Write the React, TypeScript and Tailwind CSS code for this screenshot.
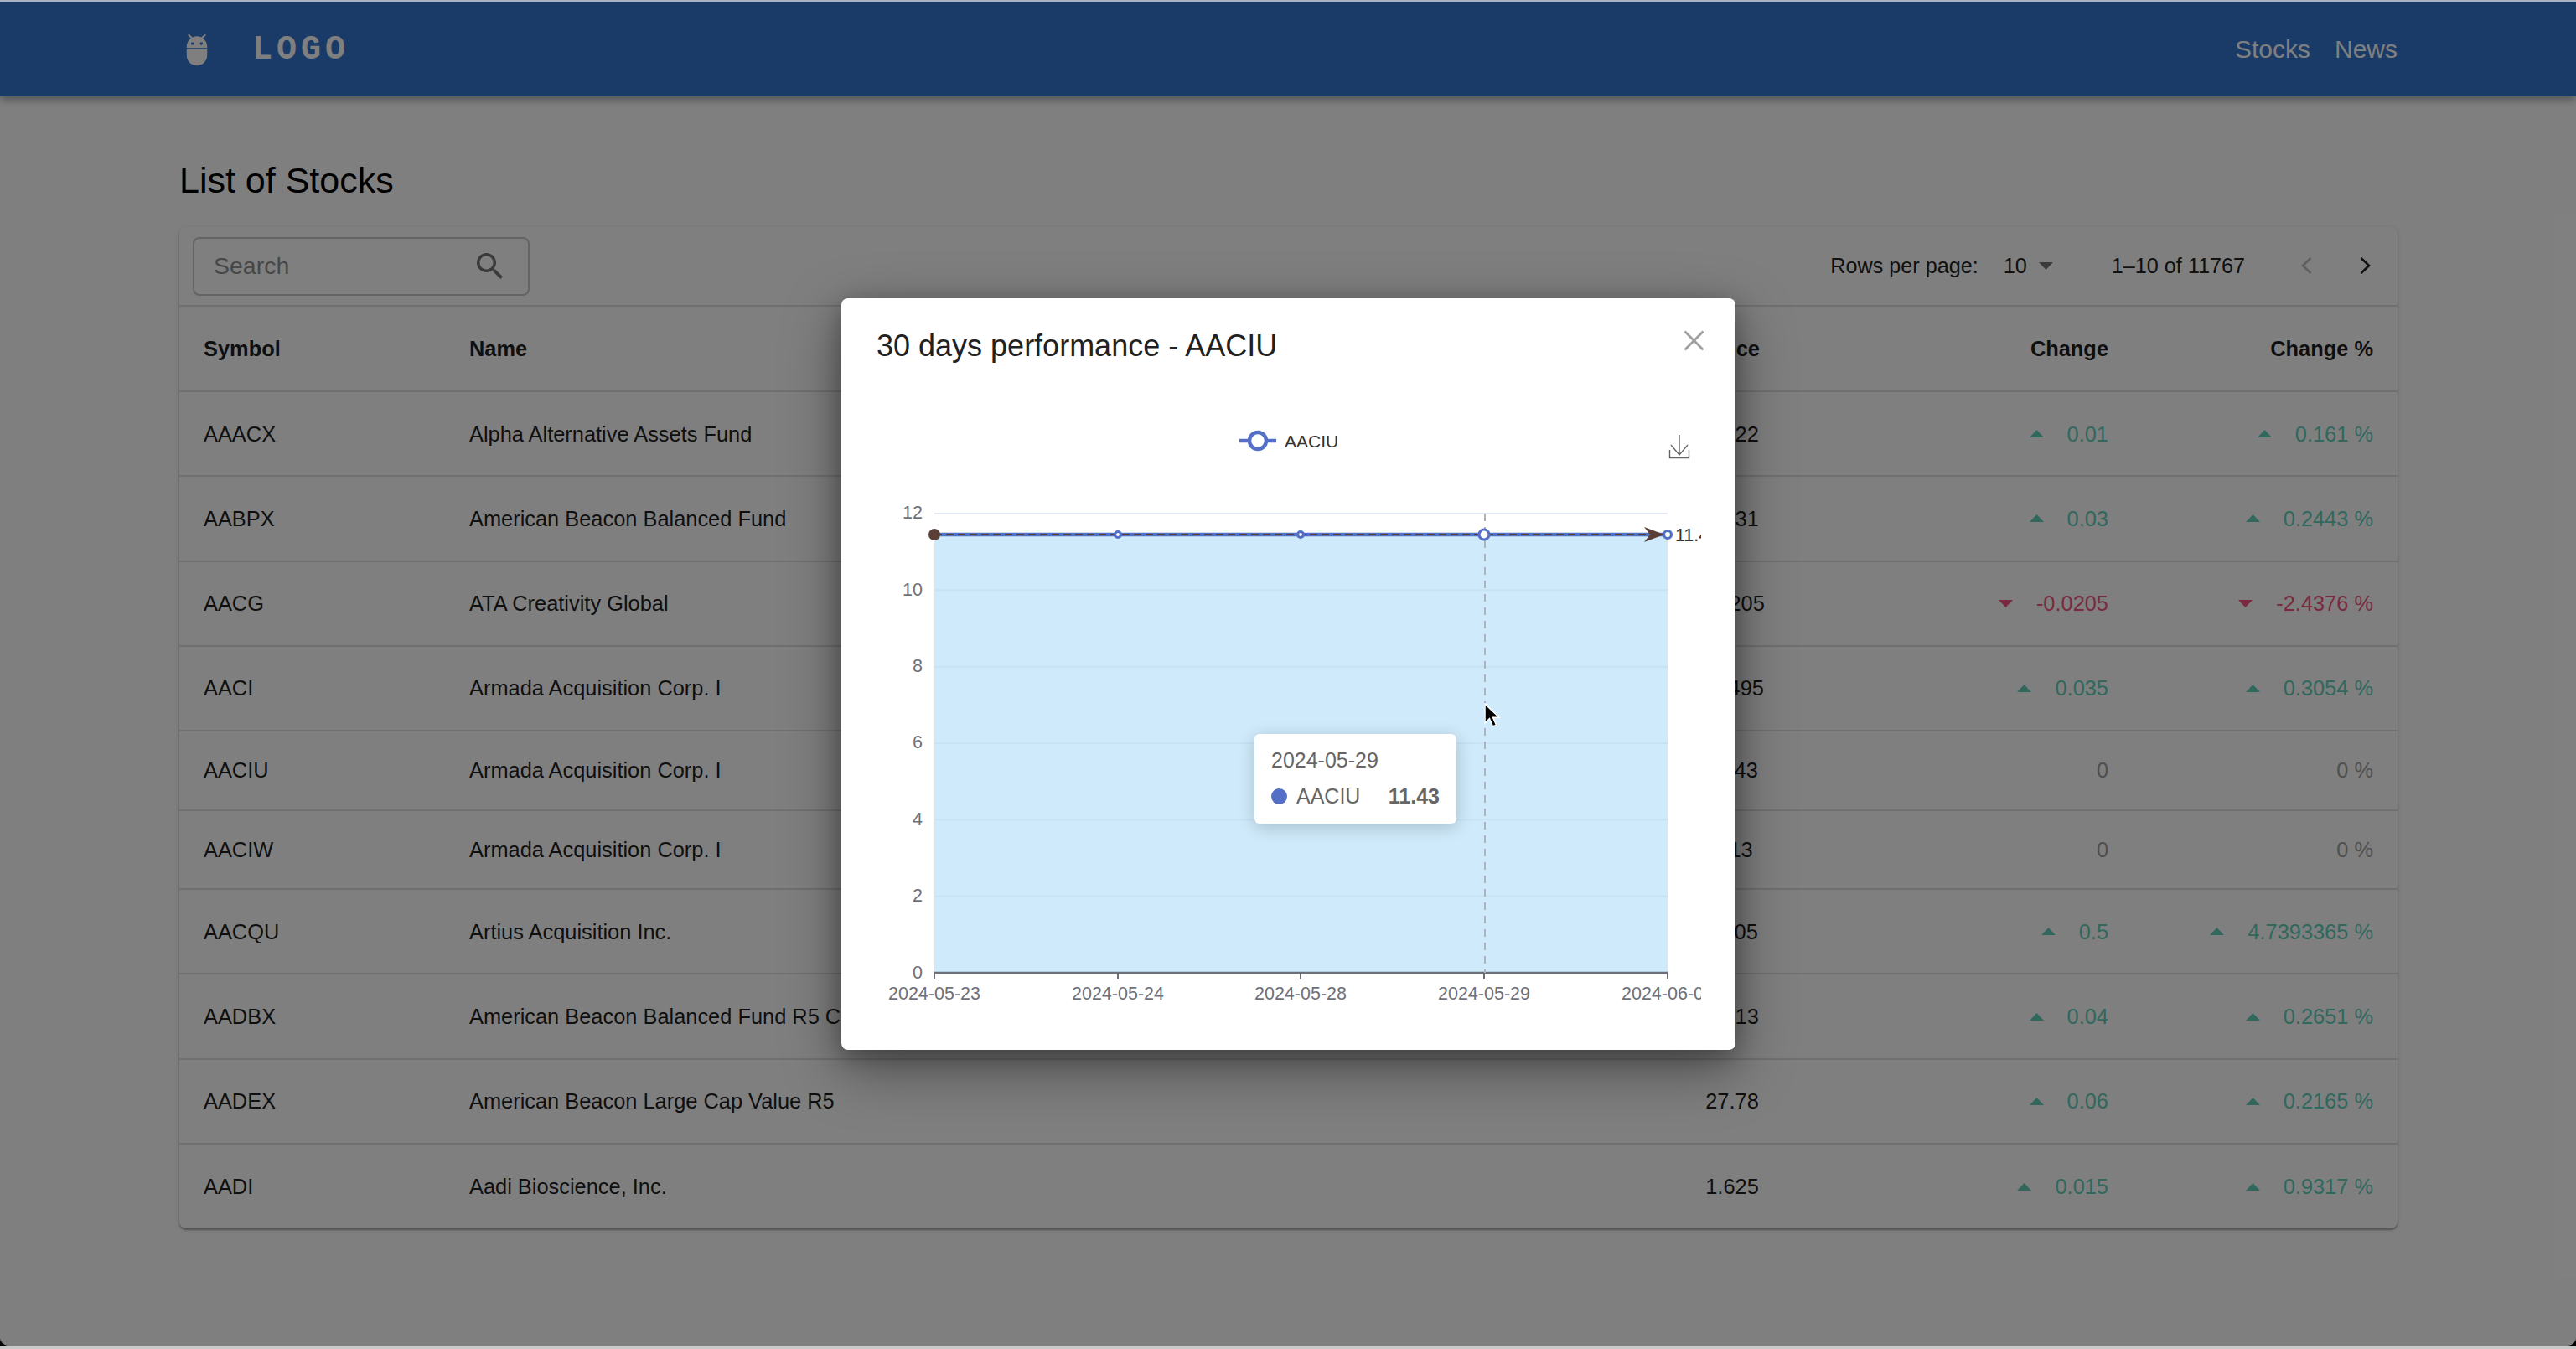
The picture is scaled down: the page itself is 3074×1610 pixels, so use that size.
const FONT = "font-['Liberation_Sans',Arial,sans-serif]";

type Row = { symbol: string; name: string; price: string; change: string; pct: string; dir: "up" | "down" | "flat" };

const ROWS: Row[] = [
  { symbol: "AAACX", name: "Alpha Alternative Assets Fund", price: "16.22", change: "0.01", pct: "0.161 %", dir: "up" },
  { symbol: "AABPX", name: "American Beacon Balanced Fund", price: "12.31", change: "0.03", pct: "0.2443 %", dir: "up" },
  { symbol: "AACG", name: "ATA Creativity Global", price: "0.8205", change: "-0.0205", pct: "-2.4376 %", dir: "down" },
  { symbol: "AACI", name: "Armada Acquisition Corp. I", price: "11.495", change: "0.035", pct: "0.3054 %", dir: "up" },
  { symbol: "AACIU", name: "Armada Acquisition Corp. I", price: "11.43", change: "0", pct: "0 %", dir: "flat" },
  { symbol: "AACIW", name: "Armada Acquisition Corp. I", price: "0.13", change: "0", pct: "0 %", dir: "flat" },
  { symbol: "AACQU", name: "Artius Acquisition Inc.", price: "11.05", change: "0.5", pct: "4.7393365 %", dir: "up" },
  { symbol: "AADBX", name: "American Beacon Balanced Fund R5 Class", price: "15.13", change: "0.04", pct: "0.2651 %", dir: "up" },
  { symbol: "AADEX", name: "American Beacon Large Cap Value R5", price: "27.78", change: "0.06", pct: "0.2165 %", dir: "up" },
  { symbol: "AADI", name: "Aadi Bioscience, Inc.", price: "1.625", change: "0.015", pct: "0.9317 %", dir: "up" },
];

function Caret({ dir }: { dir: "up" | "down" }) {
  return (
    <svg viewBox="0 0 17 9" className="w-[17px] h-[9px] mr-[28px] shrink-0 fill-current">
      {dir === "up" ? <path d="M8.5 0 17 9H0z" /> : <path d="M0 0h17L8.5 9z" />}
    </svg>
  );
}

function Delta({ value, dir }: { value: string; dir: Row["dir"] }) {
  const color = dir === "up" ? "text-[#63d0bb]" : dir === "down" ? "text-[#f5557f]" : "text-[#9e9e9e]";
  return (
    <div className={`flex items-center justify-end ${color}`}>
      {dir !== "flat" && <Caret dir={dir} />}
      <span>{value}</span>
    </div>
  );
}

function StockTable() {
  return (
    <div className="w-full rounded-lg bg-white shadow-[0_2px_2px_rgba(0,0,0,0.3),0_1px_6px_rgba(0,0,0,0.12)]">
      <div className="flex h-[95px] items-center border-b-2 border-[#e0e0e0] pl-4 pr-[31px]">
        <div className="flex h-[70px] w-[402px] items-center justify-between rounded-lg border-2 border-[#c8c8c8] pl-[23px] pr-[30px]">
          <span className="text-[28.5px] text-[#8f8f8f]">Search</span>
          <svg viewBox="3 3 17.5 17.5" className="h-[31px] w-[31px] fill-[#757575]">
            <path d="M15.5 14h-.79l-.28-.27C15.41 12.59 16 11.11 16 9.5 16 5.91 13.09 3 9.5 3S3 5.91 3 9.5 5.91 16 9.5 16c1.61 0 3.09-.59 4.23-1.57l.27.28v.79l5 4.99L20.49 19l-4.99-5zm-6 0C7.01 14 5 11.99 5 9.5S7.01 5 9.5 5 14 7.01 14 9.5 11.99 14 9.5 14z" />
          </svg>
        </div>
        <div className="ml-auto flex items-center text-[25.2px] text-[#222]">
          <span>Rows per page:</span>
          <span className="ml-[30px]">10</span>
          <svg viewBox="0 0 17 9" className="ml-[14px] h-[9px] w-[17px] fill-[#757575]">
            <path d="M0 0h17L8.5 9z" />
          </svg>
          <span className="ml-[70px]">1–10 of 11767</span>
          <svg viewBox="0 0 14 20" className="ml-[66px] h-[20px] w-[14px] fill-none stroke-[#bdbdbd] stroke-[2.6]">
            <path d="M12.5 1 3 10l9.5 9" />
          </svg>
          <svg viewBox="0 0 14 20" className="ml-[57px] h-[20px] w-[14px] fill-none stroke-[#222] stroke-[2.6]">
            <path d="M1.5 1 11 10l-9.5 9" />
          </svg>
        </div>
      </div>
      <table className="w-full table-fixed border-collapse text-[25.4px] text-[#1f1f1f]">
        <colgroup>
          <col className="w-[346px]" />
          <col className="w-[1190px]" />
          <col className="w-[390px]" />
          <col className="w-[376px]" />
          <col />
        </colgroup>
        <thead>
          <tr className="h-[101px] border-b-2 border-[#e0e0e0] font-bold">
            <th className="pl-[29px] text-left">Symbol</th>
            <th className="text-left">Name</th>
            <th className="pr-[40px] text-right">Price</th>
            <th className="text-right">Change</th>
            <th className="pr-[29px] text-right">Change %</th>
          </tr>
        </thead>
        <tbody>
          {ROWS.map((r, i) => (
            <tr
              key={r.symbol}
              className={`${r.dir === "flat" ? "h-[94.5px]" : "h-[101.3px]"} ${i < ROWS.length - 1 ? "border-b-2 border-[#e0e0e0]" : ""}`}
            >
              <td className="pl-[29px]">{r.symbol}</td>
              <td className="whitespace-nowrap">{r.name}</td>
              <td className="pl-[244px] text-center">{r.price}</td>
              <td>
                <Delta value={r.change} dir={r.dir} />
              </td>
              <td className="pr-[29px]">
                <Delta value={r.pct} dir={r.dir} />
              </td>
            </tr>
          ))}
        </tbody>
      </table>
    </div>
  );
}

function Chart() {
  const xs = [1115, 1334, 1552, 1771, 1990];
  const labels = ["2024-05-23", "2024-05-24", "2024-05-28", "2024-05-29", "2024-06-03"];
  const ticks = [0, 2, 4, 6, 8, 10, 12];
  const yOf = (v: number) => 1161 - v * 45.67;
  return (
    <svg viewBox="1004 356 1067 897" className="absolute inset-0 h-full w-full">
      <defs>
        <clipPath id="plot-clip">
          <rect x="1040" y="480" width="990" height="760" />
        </clipPath>
      </defs>
      <g clipPath="url(#plot-clip)" fontFamily="'Liberation Sans', Arial, sans-serif">
        {/* legend */}
        <path d="M1479 526h44" stroke="#5470c6" strokeWidth="4.5" />
        <circle cx="1501" cy="526" r="10" fill="#fff" stroke="#5470c6" strokeWidth="4.5" />
        <text x="1533" y="534" fontSize="21" fill="#333">AACIU</text>

        {/* area + grid */}
        <rect x="1115" y="638" width="875" height="523" fill="#cfeafa" />
        {ticks.map((t) => (
          <g key={t}>
            {t > 0 && <path d={`M1115 ${yOf(t)}H1990`} stroke={t === 12 ? "#e0e6f1" : "#c6e2f3"} strokeWidth="2" />}
            <text x="1101" y={yOf(t) + 6.5} textAnchor="end" fontSize="21.5" fill="#6e7079">{t}</text>
          </g>
        ))}

        {/* axis */}
        <path d="M1114 1161H1991" stroke="#6e7079" strokeWidth="2.5" />
        {xs.map((x, i) => (
          <g key={x}>
            <path d={`M${x} 1161v8`} stroke="#6e7079" strokeWidth="2" />
            <text x={x} y="1193" textAnchor="middle" fontSize="21.5" fill="#6e7079">{labels[i]}</text>
          </g>
        ))}

        {/* crosshair */}
        <path d="M1772 613V1161" stroke="#b0b4ba" strokeWidth="2" strokeDasharray="9 7" />

        {/* series */}
        <path d="M1115 638H1990" stroke="#5470c6" strokeWidth="4.5" />
        <path d="M1115 638H1966" stroke="#5c4038" strokeWidth="2" strokeDasharray="9 5" />
        {xs.slice(1).map((x) => (
          <circle key={x} cx={x} cy="638" r={x === 1771 ? 6 : x === 1990 ? 4.5 : 3.5} fill="#fff" stroke="#5470c6" strokeWidth="3.2" />
        ))}
        <circle cx="1115" cy="638" r="7" fill="#5c4038" />
        <path d="M1962 629 1986 638 1962 647 1969 638z" fill="#5c4038" />
        <text x="1999" y="646" fontSize="21.5" fill="#333">11.43</text>
      </g>

      {/* download tool */}
      <g fill="none" stroke="#666" strokeWidth="1.4">
        <path d="M2004 519v24M1994 531l10 12 10-12M1992.5 537v9.5h23v-9.5" />
      </g>
    </svg>
  );
}

function Modal() {
  return (
    <div className="absolute left-[1004px] top-[354px] h-[897px] w-[1067px] rounded-lg bg-white shadow-[0_22px_70px_rgba(0,0,0,0.4),0_8px_28px_rgba(0,0,0,0.28)]">
      <Chart />
      <h2 className="absolute left-[42px] top-[36px] text-[36px] leading-[42px] text-[#212121]">30 days performance - AACIU</h2>
      <svg viewBox="0 0 25 25" className="absolute left-[1005px] top-[38px] h-[25px] w-[25px] fill-none stroke-[#9e9e9e] stroke-[2.8]">
        <path d="M1.5 1.5l22 22M23.5 1.5l-22 22" />
      </svg>

      {/* tooltip */}
      <div className="absolute left-[493px] top-[520px] h-[107px] w-[241px] rounded-[6px] bg-white pl-5 pr-5 pt-[16px] text-[25px] leading-[30px] text-[#666] shadow-[0_4px_20px_rgba(0,0,0,0.2)]">
        <div>2024-05-29</div>
        <div className="mt-[13px] flex items-center">
          <span className="h-[19px] w-[19px] rounded-full bg-[#5470c6]" />
          <span className="ml-[11px]">AACIU</span>
          <span className="ml-auto font-bold">11.43</span>
        </div>
      </div>

      {/* mouse pointer */}
      <svg viewBox="0 0 20 30" className="absolute left-[767px] top-[483px] h-[30px] w-[20px]">
        <path d="M1 1v23l5.5-5.5 4 9.5 4-1.8-4-9H18z" fill="#000" stroke="#fff" strokeWidth="1.5" />
      </svg>
    </div>
  );
}

export default function App() {
  return (
    <div className={`${FONT} flex h-[1610px] w-[3074px] flex-col overflow-hidden bg-black`}>
      <div className="h-[2px] shrink-0 bg-[#a9b2c3]" />
      <div className="relative flex-1 overflow-hidden rounded-b-[10px] bg-white">
        <header className="relative z-10 flex h-[113px] items-center bg-[#3474d0] pl-[214px] pr-[213px] shadow-[0_4px_10px_rgba(0,0,0,0.35)]">
          <svg viewBox="0 0 24 24" className="mt-[1px] h-[42px] w-[42px] fill-white">
            <path d="M5 16c0 3.87 3.13 7 7 7s7-3.13 7-7v-4H5v4zM16.12 4.37l2.1-2.1-.82-.83-2.3 2.31C14.16 3.28 13.12 3 12 3s-2.16.28-3.09.75L6.6 1.44l-.82.83 2.1 2.1C6.14 5.64 5 7.68 5 10v1h14v-1c0-2.32-1.14-4.36-2.88-5.63zM9 9c-.55 0-1-.45-1-1s.45-1 1-1 1 .45 1 1-.45 1-1 1zm6 0c-.55 0-1-.45-1-1s.45-1 1-1 1 .45 1 1-.45 1-1 1z" />
          </svg>
          <span className="ml-[45px] mt-[2px] font-['Liberation_Mono',monospace] text-[40px] font-bold tracking-[5px] text-white">LOGO</span>
          <nav className="ml-auto flex gap-[29px] text-[30px] text-white">
            <span>Stocks</span>
            <span>News</span>
          </nav>
        </header>

        <main className="pl-[214px] pr-[213px] pt-[75px]">
          <h1 className="mb-[31px] text-[43px] leading-[50px] text-black">List of Stocks</h1>
          <StockTable />
        </main>

        {/* backdrop */}
        <div className="absolute inset-0 z-20 bg-black/50" />
        <div className="absolute inset-0 z-30">
          <Modal />
        </div>
      </div>
      <div className="h-[4px] shrink-0 bg-[#c9c9c9]" />
    </div>
  );
}
